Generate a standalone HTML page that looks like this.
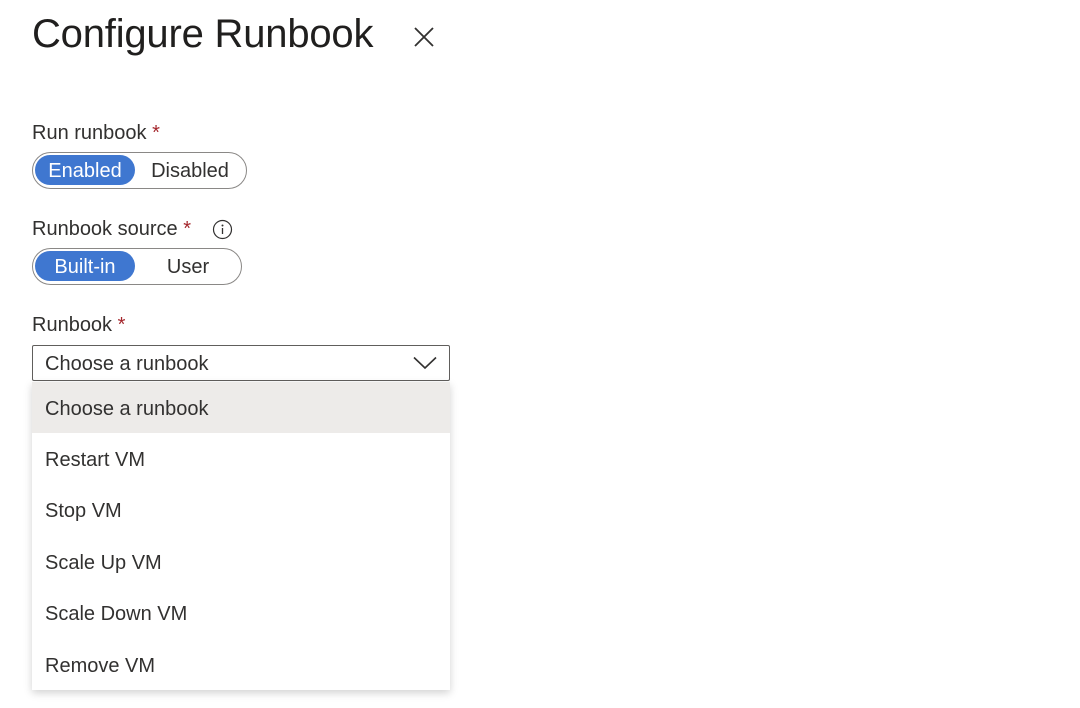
<!DOCTYPE html>
<html><head><style>
body{margin:0;width:1080px;height:708px;background:#fff;font-family:"Liberation Sans",sans-serif;color:#323130;position:relative;overflow:hidden}
.a{position:absolute}
.lbl{font-size:20px;white-space:nowrap}
.req{color:#a4262c}
.tog{border:1.5px solid #8a8886;border-radius:19px;box-sizing:border-box}
.on{background:#3f77d0;color:#fff;border-radius:16px;font-size:20px;text-align:center;line-height:32px}
.off{font-size:20px;text-align:center;line-height:32px}
.item{position:absolute;left:0;width:418px;height:51px;line-height:54px;padding-left:13px;box-sizing:border-box;font-size:20px}
</style></head><body>
<div class="a" style="left:32px;top:12px;font-size:40px;letter-spacing:-0.2px;color:#201f1e">Configure Runbook</div>
<svg class="a" style="left:413px;top:26px" width="22" height="22" viewBox="0 0 22 22"><path d="M2 2L20 20M20 2L2 20" stroke="#323130" stroke-width="1.8"/></svg>

<div class="a lbl" style="left:32px;top:122px">Run runbook <span class="req">*</span></div>
<div class="a tog" style="left:32px;top:152px;width:215px;height:37px"></div>
<div class="a on" style="left:35px;top:155px;width:100px;height:30px;line-height:30px;padding-top:1px;box-sizing:border-box;height:30px">Enabled</div>
<div class="a off" style="left:140px;top:155px;width:100px">Disabled</div>

<div class="a lbl" style="left:32px;top:218px">Runbook source <span class="req">*</span></div>
<svg class="a" style="left:212px;top:219px" width="21" height="21" viewBox="0 0 21 21"><circle cx="10.5" cy="10.5" r="9" fill="none" stroke="#323130" stroke-width="1.2"/><circle cx="10.5" cy="6.5" r="1" fill="#323130"/><path d="M10.5 9v6" stroke="#323130" stroke-width="1.3"/></svg>
<div class="a tog" style="left:32px;top:248px;width:210px;height:37px"></div>
<div class="a on" style="left:35px;top:251px;width:100px;height:30px;line-height:30px;padding-top:1px;box-sizing:border-box">Built-in</div>
<div class="a off" style="left:138px;top:251px;width:100px">User</div>

<div class="a lbl" style="left:32px;top:314px">Runbook <span class="req">*</span></div>
<div class="a" style="left:32px;top:345px;width:418px;height:36px;border:1px solid #605e5c;border-radius:2px;box-sizing:border-box"></div>
<div class="a lbl" style="left:45px;top:353px">Choose a runbook</div>
<svg class="a" style="left:413px;top:356px" width="24" height="14" viewBox="0 0 24 14"><path d="M1 1.5L12 12L23 1.5" fill="none" stroke="#323130" stroke-width="1.6"/></svg>

<div class="a" style="left:32px;top:382px;width:418px;height:308px;background:#fff;box-shadow:0 3px 8px rgba(0,0,0,0.18)">
<div class="item" style="top:0;background:#edebe9">Choose a runbook</div>
<div class="item" style="top:51px">Restart VM</div>
<div class="item" style="top:102px">Stop VM</div>
<div class="item" style="top:154px">Scale Up VM</div>
<div class="item" style="top:205px">Scale Down VM</div>
<div class="item" style="top:257px">Remove VM</div>
</div>
</body></html>
